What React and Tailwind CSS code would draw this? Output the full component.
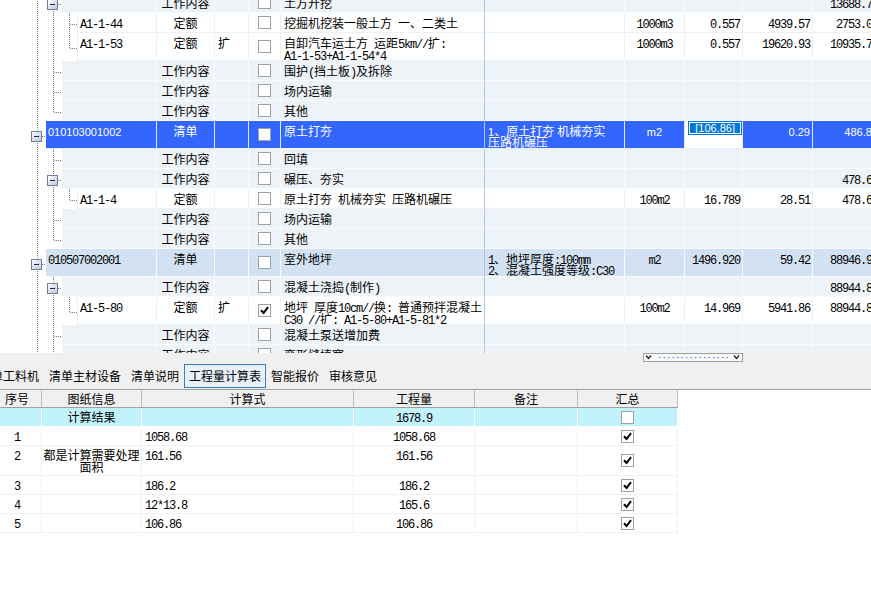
import React from 'react';

const ASC = /^[\x20-\x7e]+$/;

// split text so ascii runs get the narrow mono face (SimSun-like widths)
function T({ s, sans }) {
  return s
    .split(/([\x20-\x7e]+)/)
    .filter(Boolean)
    .map((p, i) =>
      ASC.test(p) ? (
        <span key={i} className={sans ? "font-['Liberation_Sans',sans-serif] text-[11px]" : "font-['Liberation_Mono',monospace] tracking-[-1.2px]"}>{p}</span>
      ) : (
        <span key={i}>{p}</span>
      )
    );
}

function Lines({ v, sans, small }) {
  if (!v) return null;
  const arr = Array.isArray(v) ? v : [v];
  return arr.map((s, i) => (
    <div key={i} className={`whitespace-pre ${small ? 'h-[11px] leading-[11px]' : 'h-[12px] leading-[12px]'}`}>
      <T s={s} sans={sans} />
    </div>
  ));
}

function Check({ on }) {
  return (
    <span className="w-[13px] h-[13px] border border-[#a0a0a0] bg-white flex items-center justify-center shrink-0">
      {on && (
        <svg width="9" height="9" viewBox="0 0 9 9">
          <path d="M1 4.2 L3.6 7 L8 1.2" fill="none" stroke="#000" strokeWidth="2" />
        </svg>
      )}
    </span>
  );
}

function Box({ x, y }) {
  return (
    <g>
      <rect x={x + 0.5} y={y + 0.5} width="10" height="10" fill="url(#bx)" stroke="#6f7f9f" />
      <line x1={x + 3} y1={y + 5.5} x2={x + 8} y2={y + 5.5} stroke="#1d2b4a" strokeWidth="1" />
    </g>
  );
}

function Tree({ r }) {
  const w = r.t === 'q' ? 46 : r.t === 'w' ? 62 : 77;
  const h = r.h === 28 ? 28 : 20;
  const m = h === 28 ? 15.5 : 11.5;
  const dot = { stroke: '#7a7a7a', strokeDasharray: '1 1', shapeRendering: 'crispEdges' };
  return (
    <svg width={w} height={h} className="block shrink-0 bg-white">
      <defs>
        <linearGradient id="bx" x1="0" y1="0" x2="1" y2="1">
          <stop offset="0" stopColor="#ffffff" />
          <stop offset="1" stopColor="#b9c6dc" />
        </linearGradient>
      </defs>
      <line x1="37.5" y1="0" x2="37.5" y2={h} {...dot} />
      {r.t === 'q' && (
        <>
          <line x1="42" y1={m} x2="46" y2={m} {...dot} />
          <Box x={31} y={m - 5.5} />
        </>
      )}
      {r.t !== 'q' && <line x1="53.5" y1="0" x2="53.5" y2={r.last1 ? m : h} {...dot} />}
      {r.t === 'w' && (r.box ? (
        <>
          <line x1="58" y1={m} x2="62" y2={m} {...dot} />
          <Box x={47} y={m - 5.5} />
        </>
      ) : (
        <line x1="54" y1={m} x2="62" y2={m} {...dot} />
      ))}
      {r.t === 'd' && (
        <>
          <line x1="69.5" y1="0" x2="69.5" y2={r.last2 ? m : h} {...dot} />
          <line x1="70" y1={m} x2="77" y2={m} {...dot} />
        </>
      )}
    </svg>
  );
}

const top = [
  { t: 'w', box: true, cat: '工作内容', name: '土方开挖', total: '13688.78' },
  { t: 'd', code: 'A1-1-44', cat: '定额', name: '挖掘机挖装一般土方 一、二类土', unit: '1000m3', qty: '0.557', price: '4939.57', total: '2753.08' },
  { t: 'd', h: 28, last2: true, code: 'A1-1-53', cat: '定额', ext: '扩', name: ['自卸汽车运土方 运距5km//扩:', 'A1-1-53+A1-1-54*4'], unit: '1000m3', qty: '0.557', price: '19620.93', total: '10935.72' },
  { t: 'w', cat: '工作内容', name: '围护(挡土板)及拆除' },
  { t: 'w', cat: '工作内容', name: '场内运输' },
  { t: 'w', last1: true, cat: '工作内容', name: '其他' },
  { t: 'q', h: 28, sel: true, code: '010103001002', cat: '清单', name: '原土打夯', feat: ['1、原土打夯 机械夯实', '压路机碾压'], unit: 'm2', qty: '[106.86]', price: '0.29', total: '486.89' },
  { t: 'w', cat: '工作内容', name: '回填' },
  { t: 'w', box: true, cat: '工作内容', name: '碾压、夯实', total: '478.64' },
  { t: 'd', last2: true, code: 'A1-1-4', cat: '定额', name: '原土打夯 机械夯实 压路机碾压', unit: '100m2', qty: '16.789', price: '28.51', total: '478.64' },
  { t: 'w', cat: '工作内容', name: '场内运输' },
  { t: 'w', last1: true, cat: '工作内容', name: '其他' },
  { t: 'q', h: 28, code: '010507002001', cat: '清单', name: '室外地坪', feat: ['1、地坪厚度:100mm', '2、混凝土强度等级:C30'], unit: 'm2', qty: '1496.920', price: '59.42', total: '88946.91' },
  { t: 'w', box: true, cat: '工作内容', name: '混凝土浇捣(制作)', total: '88944.83' },
  { t: 'd', h: 28, last2: true, code: 'A1-5-80', cat: '定额', ext: '扩', checked: true, name: ['地坪 厚度10cm//换: 普通预拌混凝土', 'C30 //扩: A1-5-80+A1-5-81*2'], unit: '100m2', qty: '14.969', price: '5941.86', total: '88944.83' },
  { t: 'w', cat: '工作内容', name: '混凝土泵送增加费' },
  { t: 'w', cat: '工作内容', name: '变形缝填塞' },
];

function GridRow({ r }) {
  const h = r.h === 28 ? 'h-[28px]' : 'h-[20px]';
  const bg = r.sel ? 'bg-[#3366ff] text-white' : r.t === 'q' ? 'bg-[#d3e2f2]' : r.t === 'w' ? 'bg-[#eef3f8]' : 'bg-white';
  const ln = r.t === 'd' ? 'border-[#edf1f6]' : r.sel ? 'border-[#e6ecff]' : 'border-[#f8fafd]';
  const c = `${ln} border-r border-b pt-[4px] overflow-hidden shrink-0`;
  const codeW = r.t === 'q' ? 'w-[111px]' : r.t === 'w' ? 'w-[95px]' : 'w-[80px] border-l';
  const sans = !!r.sel;
  return (
    <div className={`flex ${h}`}>
      <Tree r={r} />
      <div className={`flex ${bg}`}>
        <div className={`${c} ${codeW} px-[2px]`}><Lines v={r.code} sans={sans} /></div>
        <div className={`${c} w-[58px] text-center`}><Lines v={r.cat} sans={sans} /></div>
        <div className={`${c} w-[34px] px-[3px]`}><Lines v={r.ext} sans={sans} /></div>
        <div className={`${c} w-[32px] !pt-0 flex items-center justify-center`}><Check on={r.checked} /></div>
        <div className={`border-b ${r.t === 'd' ? 'border-b-[#edf1f6]' : 'border-b-[#f8fafd]'} border-r border-r-[#a9c8ee] w-[204px] px-[3px] pt-[4px] overflow-hidden shrink-0`}><Lines v={r.name} sans={sans} /></div>
        <div className={`${c} w-[140px] px-[3px]`}><Lines v={r.feat} sans={sans} small /></div>
        <div className={`${c} w-[60px] text-center`}><Lines v={r.unit} sans={sans} /></div>
        {r.sel ? (
          <div className={`${c} w-[58px] bg-white !pt-[1px] flex justify-end pr-[1px]`}>
            <span className="h-[12px] leading-[12px] bg-[#0078d7] text-white px-[5px] border border-white outline outline-[#0078d7] font-['Liberation_Sans',sans-serif] text-[11px] flex items-center">{r.qty}</span>
          </div>
        ) : (
          <div className={`${c} w-[58px] text-right pr-[2px]`}><Lines v={r.qty} sans={sans} /></div>
        )}
        <div className={`${c} w-[70px] text-right pr-[2px]`}><Lines v={r.price} sans={sans} /></div>
        <div className={`${c} w-[68px] text-right pr-[2px]`}><Lines v={r.total} sans={sans} /></div>
      </div>
    </div>
  );
}

const tabs = ['单工料机', '清单主材设备', '清单说明', '工程量计算表', '智能报价', '审核意见'];

const calc = [
  { no: '', info: '计算结果', expr: '', qty: '1678.9', chk: false, cyan: true },
  { no: '1', expr: '1058.68', qty: '1058.68', chk: true },
  { no: '2', info: ['都是计算需要处理', '面积'], expr: '161.56', qty: '161.56', chk: true, tall: true },
  { no: '3', expr: '186.2', qty: '186.2', chk: true },
  { no: '4', expr: '12*13.8', qty: '165.6', chk: true },
  { no: '5', expr: '106.86', qty: '106.86', chk: true },
];

function CalcRow({ r }) {
  const ln = r.cyan ? 'border-white' : 'border-[#eef2f7]';
  const c = `${ln} border-r border-b pt-[3px] shrink-0`;
  return (
    <div className={`flex -ml-[7px] w-fit ${r.tall ? 'h-[30px]' : 'h-[19px]'} ${r.cyan ? 'bg-[#c2f2fc]' : 'bg-white'}`}>
      <div className={`${c} w-[49px] text-center`}><Lines v={r.no} /></div>
      <div className={`${c} w-[100px] text-center`}><Lines v={r.info} /></div>
      <div className={`${c} w-[212px] px-[3px]`}><Lines v={r.expr} /></div>
      <div className={`${c} w-[121px] text-center`}><Lines v={r.qty} /></div>
      <div className={`${c} w-[103px]`} />
      <div className={`${ln} border-r border-b w-[100px] flex items-center justify-center`}><Check on={r.chk} /></div>
    </div>
  );
}

export default function App() {
  return (
    <div className="w-[871px] h-[591px] overflow-hidden bg-white text-black font-['Noto_Sans_CJK_SC',sans-serif] text-[12px] leading-[12px]">
      <div className="h-[353px] overflow-hidden">
        <div className="-mt-[7px] w-[881px]">
          {top.map((r, i) => <GridRow key={i} r={r} />)}
        </div>
      </div>

      <div className="h-[36px] bg-[#f0f0f0]">
        <div className="ml-[643px] w-[100px] h-[9px] border border-[#a0a0a0] bg-[#f8f8f8]">
          <svg width="98" height="7" className="block">
            <path d="M2 1.5 L4.5 4.5 L7 1.5" fill="none" stroke="#222" strokeWidth="1.3" />
            <path d="M90 1.5 L92.5 4.5 L95 1.5" fill="none" stroke="#222" strokeWidth="1.3" />
            <line x1="15" y1="3.5" x2="85" y2="3.5" stroke="#4a86e8" strokeWidth="1.2" strokeDasharray="1.5 3" />
          </svg>
        </div>
        <div className="flex h-[24px] mt-[2px] -ml-[14px]">
          {tabs.map((t) => (
            <div key={t} className={`px-[4px] border flex items-center whitespace-nowrap ${t === '工程量计算表' ? 'border-[#3c7fc0] bg-[#e8f1fb]' : 'border-transparent'}`}>{t}</div>
          ))}
        </div>
      </div>

      <div className="border-t border-[#a0a0a0]">
        <div className="flex -ml-[7px] w-fit h-[18px] bg-[#f0f0f0] border-b border-[#a0a0a0]">
          {[
            ['序号', 'w-[49px]'],
            ['图纸信息', 'w-[100px]'],
            ['计算式', 'w-[212px]'],
            ['工程量', 'w-[121px]'],
            ['备注', 'w-[103px]'],
            ['汇总', 'w-[100px]'],
          ].map(([t, w]) => (
            <div key={t} className={`${w} h-full flex items-center justify-center border-r border-[#bdbdbd] pt-[1px]`}>{t}</div>
          ))}
        </div>
        {calc.map((r, i) => <CalcRow key={i} r={r} />)}
      </div>
    </div>
  );
}
